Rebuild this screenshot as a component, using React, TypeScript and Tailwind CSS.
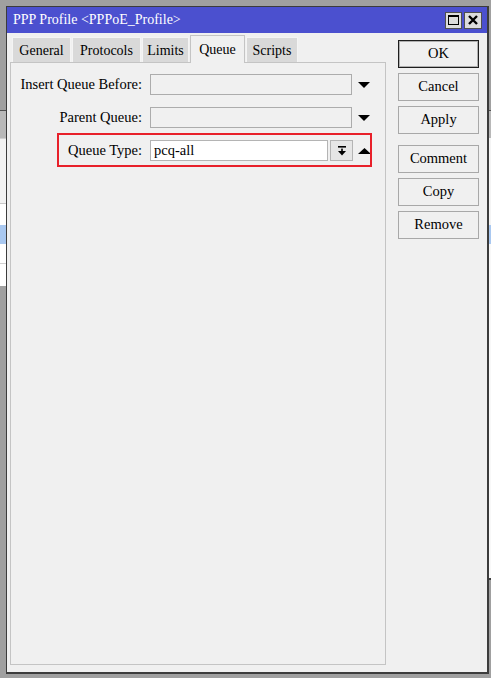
import React from "react";

const serif = { fontFamily: '"Liberation Serif", "Times New Roman", serif' };

function DownTri() {
  return (
    <svg width="12" height="6" viewBox="0 0 12 6" className="block">
      <polygon points="0,0 12,0 6,6" fill="#000" />
    </svg>
  );
}

function UpTri() {
  return (
    <svg width="13" height="6" viewBox="0 0 13 6" className="block">
      <polygon points="0,6 13,6 6.5,0" fill="#000" />
    </svg>
  );
}

function BarDown() {
  return (
    <svg width="8" height="10" viewBox="0 0 8 10" className="block">
      <rect x="0" y="0" width="8" height="1.6" fill="#000" />
      <rect x="3.2" y="2.6" width="1.6" height="3" fill="#000" />
      <polygon points="0,5 8,5 4,9.5" fill="#000" />
    </svg>
  );
}

function Tab({ label, w, active }: { label: string; w: string; active?: boolean }) {
  return active ? (
    <div className={"h-[28px] -mb-[1px] relative z-10 flex justify-center items-start pt-[3px] bg-[#f0f0f0] border border-b-0 border-[#c4c4c4] text-[14px] text-black " + w}>
      {label}
    </div>
  ) : (
    <div className={"h-[25px] flex justify-center items-center bg-[#d9d9d9] border border-b-0 border-[#f4f4f4] text-[14px] text-black " + w}>
      {label}
    </div>
  );
}

function Btn({ label, def }: { label: string; def?: boolean }) {
  return (
    <div
      className={
        "h-[28px] w-[81px] flex items-center justify-center bg-[#f0f0f0] text-[14.5px] text-black " +
        (def ? "border border-[#1e1e1e] shadow-[inset_0_0_0_1px_#b0b0b0]" : "border-[1.5px] border-[#a8a8a8]")
      }
    >
      {label}
    </div>
  );
}

export default function App() {
  return (
    <div className="relative w-[491px] h-[678px] overflow-hidden bg-[#a0a0a0] flex justify-between" style={serif}>
      {/* desktop background: window behind on the left */}
      <div className="w-[6px] flex flex-col">
        <div className="h-[110px] bg-[#a0a0a0]" />
        <div className="h-[1px] bg-[#505050]" />
        <div className="h-[27px] bg-[#b8b8b8]" />
        <div className="h-[1px] bg-[#d0d0d0]" />
        <div className="h-[64px] bg-[#f2f2f2]" />
        <div className="h-[1px] bg-[#c8c8c8]" />
        <div className="h-[21px] bg-white" />
        <div className="h-[19px] bg-[#a9c8f0]" />
        <div className="h-[19px] bg-white" />
        <div className="h-[1px] bg-[#d0d0d0]" />
        <div className="h-[22px] bg-white" />
        <div className="flex-1 bg-[#a0a0a0]" />
      </div>
      <div className="w-[3px] flex flex-col">
        <div className="h-[110px] bg-[#a0a0a0]" />
        <div className="h-[1px] bg-[#505050]" />
        <div className="h-[27px] bg-[#b8b8b8]" />
        <div className="h-[87px] bg-[#f4f4f4]" />
        <div className="h-[19px] bg-[#a9c8f0]" />
        <div className="h-[334px] bg-[#f8f8f8]" />
        <div className="h-[2px] bg-[#404040]" />
        <div className="flex-1 bg-[#a0a0a0]" />
      </div>

      {/* dialog window */}
      <div className="absolute left-[6px] top-[6px] w-[483px] h-[668px] flex flex-col bg-[#f0f0f0] border-l border-t border-r-2 border-b-2 border-[#3c3c3c]">
        {/* title bar */}
        <div className="h-[26px] bg-[#4b50cf] flex items-center pl-[6px] pr-[5px]">
          <div className="flex-1 text-white text-[14px] leading-none">PPP Profile &lt;PPPoE_Profile&gt;</div>
          <div className="flex gap-[2px]">
            <div className="w-[17px] h-[17px] bg-[#dcdcdc] border border-[#505050] flex items-center justify-center">
              <div className="w-[11px] h-[10px] border border-black border-t-2" />
            </div>
            <div className="w-[18px] h-[17px] bg-[#dcdcdc] border border-[#505050] flex items-center justify-center">
              <svg width="10" height="10" viewBox="0 0 10 10">
                <path d="M1 1 L9 9 M9 1 L1 9" stroke="#000" strokeWidth="2.4" />
              </svg>
            </div>
          </div>
        </div>

        {/* body */}
        <div className="flex-1 flex pl-[3px] pt-[2px] pb-[7px]">
          {/* tabs + panel */}
          <div className="w-[376px] flex flex-col">
            <div className="h-[27px] flex items-end pl-[2px] gap-[1px]">
              <Tab label="General" w="w-[59px]" />
              <Tab label="Protocols" w="w-[69px]" />
              <Tab label="Limits" w="w-[47px]" />
              <Tab label="Queue" w="w-[55px]" active />
              <Tab label="Scripts" w="w-[52px]" />
            </div>
            <div className="relative flex-1 border border-[#c4c4c4] bg-[#f0f0f0] pt-[11px] flex flex-col gap-[12px]">
              <div className="flex items-center h-[21px]">
                <div className="w-[131px] text-right text-[14.5px] text-black whitespace-nowrap">Insert Queue Before:</div>
                <div className="ml-[8px] w-[202px] h-[21px] border border-[#acacac] bg-[#f0f0f0]" />
                <div className="ml-[6px]"><DownTri /></div>
              </div>
              <div className="flex items-center h-[21px]">
                <div className="w-[131px] text-right text-[14.5px] text-black">Parent Queue:</div>
                <div className="ml-[8px] w-[202px] h-[21px] border border-[#acacac] bg-[#f0f0f0]" />
                <div className="ml-[6px]"><DownTri /></div>
              </div>
              <div className="flex items-center h-[21px]">
                <div className="w-[131px] text-right text-[14.5px] text-black">Queue Type:</div>
                <div className="ml-[8px] w-[178px] h-[21px] border border-[#b4b4b4] bg-white flex items-center pl-[3px] text-[14.5px] text-black">
                  pcq-all
                </div>
                <div className="ml-[2px] w-[23px] h-[21px] border border-[#b4b4b4] bg-[#e6e6e6] flex items-center justify-center">
                  <BarDown />
                </div>
                <div className="ml-[5px]"><UpTri /></div>
              </div>
              {/* highlight annotation */}
              <div className="absolute left-[46px] top-[70px] w-[315px] h-[34px] border-2 border-[#e8202a] pointer-events-none" />
            </div>
          </div>

          {/* buttons */}
          <div className="ml-[12px] pt-[5px] flex flex-col gap-[5px]">
            <Btn label="OK" def />
            <Btn label="Cancel" />
            <Btn label="Apply" />
            <div className="mt-[6px] flex flex-col gap-[5px]">
              <Btn label="Comment" />
              <Btn label="Copy" />
              <Btn label="Remove" />
            </div>
          </div>
        </div>
      </div>
    </div>
  );
}
